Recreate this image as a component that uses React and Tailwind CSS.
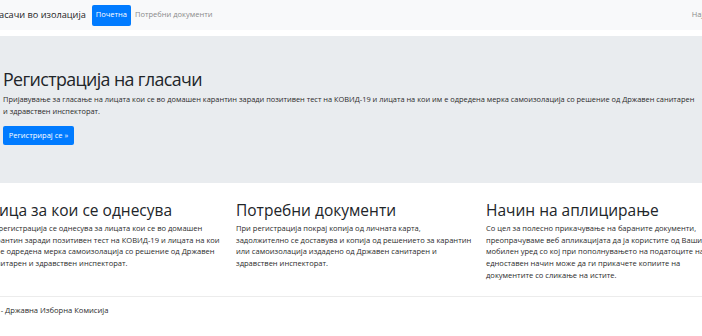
export default function App() {
    const font = { fontFamily: '"Open Sans", "Noto Sans", sans-serif' };

    return (
        <div className="relative w-[702px] h-[336px] overflow-hidden bg-white text-[#212529]" style={font}>
            {/* navbar */}
            <div className="h-[30px] bg-[#f8f9fa] flex items-center whitespace-nowrap">
                <span className="-ml-[11px] text-[9.2px] text-[#1c1c1c]">Гласачи во изолација</span>
                <div className="ml-[6px] flex items-center">
                    <span className="bg-[#007bff] text-white text-[7.5px] px-[4px] h-[21px] flex items-center rounded-[2px]">Почетна</span>
                    <span className="ml-[4px] text-[7.5px] text-[#8a8a8a]">Потребни документи</span>
                </div>
                <span className="ml-auto -mr-[14px] text-[7.5px] text-[#8a8a8a]">Најава</span>
            </div>

            {/* jumbotron */}
            <div className="mt-[6px] h-[147px] bg-[#e9ecef] pl-[3px] pt-[31px]">
                <h1 className="text-[17.8px] leading-[24px] tracking-[-0.6px] whitespace-nowrap">Регистрација на гласачи</h1>
                <p className="mt-[2px] w-[760px] text-[7.42px] leading-[12px] text-[#2b2b2b]">
                    Пријавување за гласање на лицата кои се во домашен карантин заради позитивен тест на КОВИД-19 и лицата на кои им е одредена мерка самоизолација со решение од Државен санитарен
                    <br />
                    и здравствен инспекторат.
                </p>
                <button className="mt-[9px] h-[19px] w-[71px] bg-[#007bff] text-white text-[7.5px] rounded-[2px]">
                    Регистрирај се »
                </button>
            </div>

            {/* columns */}
            <div className="flex -ml-[12px] mt-[17px] gap-[11px]">
                <div className="w-[237px] shrink-0">
                    <h2 className="text-[15.5px] leading-[20px] whitespace-nowrap">Лица за кои се однесува</h2>
                    <p className="mt-[3px] text-[7.55px] leading-[11.7px] text-[#2b2b2b]">
                        За регистрација се однесува за лицата кои се во домашен карантин заради позитивен тест на КОВИД-19 и лицата на кои им е одредена мерка самоизолација со решение од Државен санитарен и здравствен инспекторат.
                    </p>
                </div>
                <div className="w-[239px] shrink-0">
                    <h2 className="text-[15.5px] leading-[20px] whitespace-nowrap">Потребни документи</h2>
                    <p className="mt-[3px] text-[7.55px] leading-[11.7px] text-[#2b2b2b]">
                        При регистрација покрај копија од личната карта, задолжително се доставува и копија од решението за карантин или самоизолација издадено од Државен санитарен и здравствен инспекторат.
                    </p>
                </div>
                <div className="w-[237px] shrink-0">
                    <h2 className="text-[15.5px] leading-[20px] whitespace-nowrap">Начин на аплицирање</h2>
                    <p className="mt-[3px] text-[7.55px] leading-[11.7px] text-[#2b2b2b]">
                        Со цел за полесно прикачување на бараните документи, преопрачуваме веб апликацијата да ја користите од Вашиот мобилен уред со кој при пополнувањето на податоците на едноставен начин може да ги прикачете копиите на документите со сликање на истите.
                    </p>
                </div>
            </div>

            {/* footer */}
            <div className="absolute top-[296px] left-0 w-[702px] border-t border-[#ececec]">
                <p className="mt-[8px] -ml-[27px] text-[7.6px] whitespace-nowrap text-[#2b2b2b]">© 2020 - Државна Изборна Комисија</p>
            </div>
        </div>
    );
}
